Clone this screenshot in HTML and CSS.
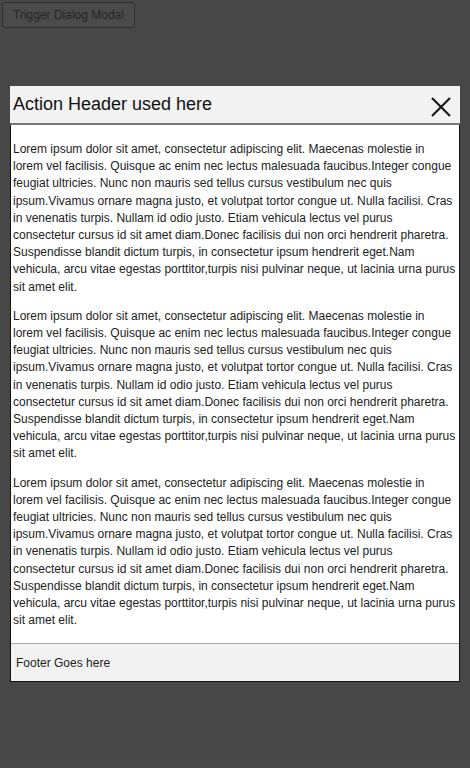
FILE: index.html
```html
<!DOCTYPE html>
<html>
<head>
<meta charset="utf-8">
<link rel="stylesheet" href="styles.css">
</head>
<body>
<button class="trigger">Trigger Dialog Modal</button>
<div class="overlay">
  <div class="modal">
    <div class="modal-header">
      <h2 class="modal-title">Action Header used here</h2>
      <span class="close" aria-label="Close">
        <svg width="20" height="20" viewBox="0 0 20 20"><path d="M1 1 L19 19 M19 1 L1 19" stroke="#1a1a1a" stroke-width="2.2" fill="none"/></svg>
      </span>
    </div>
    <div class="modal-box">
      <div class="modal-body">
        <p>Lorem ipsum dolor sit amet, consectetur adipiscing elit. Maecenas molestie in lorem vel facilisis. Quisque ac enim nec lectus malesuada faucibus.Integer congue feugiat ultricies. Nunc non mauris sed tellus cursus vestibulum nec quis ipsum.Vivamus ornare magna justo, et volutpat tortor congue ut. Nulla facilisi. Cras in venenatis turpis. Nullam id odio justo. Etiam vehicula lectus vel purus consectetur cursus id sit amet diam.Donec facilisis dui non orci hendrerit pharetra. Suspendisse blandit dictum turpis, in consectetur ipsum hendrerit eget.Nam vehicula, arcu vitae egestas porttitor,turpis nisi pulvinar neque, ut lacinia urna purus sit amet elit.</p>
        <p>Lorem ipsum dolor sit amet, consectetur adipiscing elit. Maecenas molestie in lorem vel facilisis. Quisque ac enim nec lectus malesuada faucibus.Integer congue feugiat ultricies. Nunc non mauris sed tellus cursus vestibulum nec quis ipsum.Vivamus ornare magna justo, et volutpat tortor congue ut. Nulla facilisi. Cras in venenatis turpis. Nullam id odio justo. Etiam vehicula lectus vel purus consectetur cursus id sit amet diam.Donec facilisis dui non orci hendrerit pharetra. Suspendisse blandit dictum turpis, in consectetur ipsum hendrerit eget.Nam vehicula, arcu vitae egestas porttitor,turpis nisi pulvinar neque, ut lacinia urna purus sit amet elit.</p>
        <p>Lorem ipsum dolor sit amet, consectetur adipiscing elit. Maecenas molestie in lorem vel facilisis. Quisque ac enim nec lectus malesuada faucibus.Integer congue feugiat ultricies. Nunc non mauris sed tellus cursus vestibulum nec quis ipsum.Vivamus ornare magna justo, et volutpat tortor congue ut. Nulla facilisi. Cras in venenatis turpis. Nullam id odio justo. Etiam vehicula lectus vel purus consectetur cursus id sit amet diam.Donec facilisis dui non orci hendrerit pharetra. Suspendisse blandit dictum turpis, in consectetur ipsum hendrerit eget.Nam vehicula, arcu vitae egestas porttitor,turpis nisi pulvinar neque, ut lacinia urna purus sit amet elit.</p>
      </div>
      <div class="modal-footer">Footer Goes here</div>
    </div>
  </div>
</div>
</body>
</html>
```
FILE: styles.css
```css
html, body {
  margin: 0;
  padding: 0;
  background: #474747;
  font-family: "Liberation Sans", Arial, sans-serif;
}
body {
  padding: 2px;
  min-height: 768px;
  box-sizing: border-box;
}
.trigger {
  font-family: "Liberation Sans", Arial, sans-serif;
  font-size: 12px;
  color: #262626;
  background: #4b4b4b;
  border: 1px solid #303030;
  border-radius: 3px;
  height: 26px;
  padding: 0 10px;
  margin: 0;
}
.overlay {
  position: fixed;
  left: 10px;
  top: 86px;
  width: 450px;
}
.modal {
  display: flex;
  flex-direction: column;
}
.modal-header {
  display: flex;
  align-items: center;
  justify-content: space-between;
  background: #f2f2f2;
  height: 37px;
  border-bottom: 2px solid #777;
  padding: 0 9px 0 3px;
}
.modal-title {
  margin: 0;
  font-size: 18px;
  font-weight: normal;
  color: #111;
}
.close {
  display: flex;
  width: 20px;
  height: 20px;
  margin-top: 5px;
}
.modal-box {
  border: 1px solid #111;
  border-top: 0;
  background: #fff;
}
.modal-body {
  padding: 4px 2px 2px 2px;
  font-size: 12px;
  line-height: 17.2px;
  color: #222;
}
.modal-body p {
  margin: 12px 0;
}
.modal-footer {
  background: #f2f2f2;
  border-top: 1px solid #aaa;
  font-size: 12px;
  color: #222;
  height: 37px;
  display: flex;
  align-items: center;
  padding-left: 5px;
}
```
